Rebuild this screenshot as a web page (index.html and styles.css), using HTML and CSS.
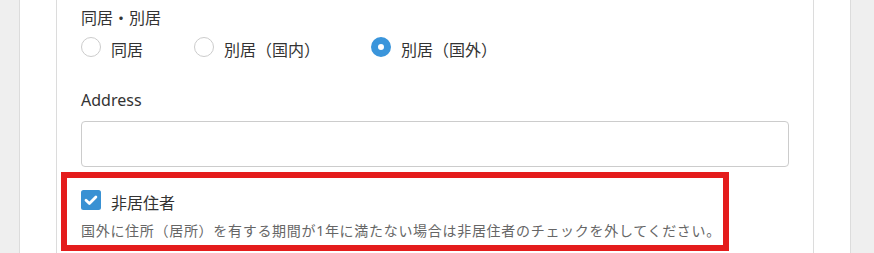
FILE: index.html
```html
<!DOCTYPE html>
<html lang="ja">
<head>
<meta charset="utf-8">
<title>居住情報</title>
<link rel="stylesheet" href="styles.css">
</head>
<body>
<div class="panel">
  <div class="card">
    <div class="field">
      <div class="label">同居・別居</div>
      <div class="radios">
        <label class="radio"><span class="dot"></span><span>同居</span></label>
        <label class="radio"><span class="dot"></span><span>別居（国内）</span></label>
        <label class="radio"><span class="dot checked"></span><span>別居（国外）</span></label>
      </div>
    </div>
    <div class="field address">
      <div class="label">Address</div>
      <div class="input"></div>
    </div>
    <div class="highlight">
      <label class="check">
        <svg class="box" width="20" height="20" viewBox="0 0 20 20"><rect x="0" y="0" width="20" height="20" rx="2.5" fill="#3991d3"/><path d="M5 10.2 L8.4 13.4 L14.9 6.9" fill="none" stroke="#fff" stroke-width="2.8" stroke-linecap="round" stroke-linejoin="round"/></svg>
        <span>非居住者</span>
      </label>
      <p class="help">国外に住所（居所）を有する期間が1年に満たない場合は非居住者のチェックを外してください。</p>
    </div>
  </div>
</div>
</body>
</html>
```
FILE: styles.css
```css
html, body {
  margin: 0;
  padding: 0;
  height: 100%;
}
body {
  background: #efefef;
  font-family: "Noto Sans", "Noto Sans CJK JP", sans-serif;
  font-size: 16px;
  line-height: 24px;
  color: #333;
  overflow: hidden;
}
.panel {
  margin-left: 19px;
  width: 832px;
  box-sizing: border-box;
  height: 100%;
  background: #fff;
  border-left: 1px solid #dcdcdc;
  border-right: 1px solid #dcdcdc;
  padding: 0 36px;
}
.card {
  height: 100%;
  box-sizing: border-box;
  border-left: 1px solid #dcdcdc;
  border-right: 1px solid #dcdcdc;
  padding: 6px 24px 0;
}
.label {
  color: #333;
}
.radios {
  display: flex;
  margin-top: 8px;
}
.radio {
  display: flex;
  align-items: flex-start;
  gap: 10px;
  margin-right: 51px;
}
.dot {
  display: block;
  width: 20px;
  height: 20px;
  margin-top: -1px;
  box-sizing: border-box;
  border: 1.5px solid #cccccc;
  border-radius: 50%;
  background: #fff;
  flex: none;
}
.dot.checked {
  border: 7px solid #3a95db;
}
.address {
  margin-top: 26px;
}
.input {
  margin-top: 9px;
  height: 46px;
  box-sizing: border-box;
  border: 1px solid #cccccc;
  border-radius: 4px;
  background: #fff;
}
.highlight {
  margin-top: 5px;
  margin-left: -20px;
  width: 668px;
  box-sizing: border-box;
  border: 6px solid #e41c1c;
  padding: 13px 0 3px 14px;
}
.check {
  display: flex;
  align-items: flex-start;
  gap: 10px;
}
.box {
  display: block;
  flex: none;
  margin-top: -1px;
}
.help {
  margin: 5px 0 0;
  font-size: 14px;
  line-height: 22px;
  letter-spacing: 0.7px;
  color: #666;
  white-space: nowrap;
}
```
